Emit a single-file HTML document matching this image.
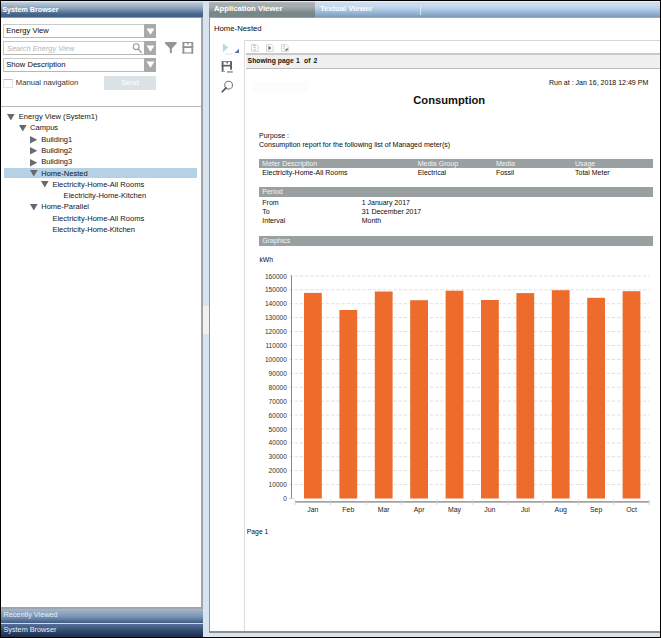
<!DOCTYPE html>
<html><head><meta charset="utf-8"><style>
html,body{margin:0;padding:0;}
body{width:661px;height:638px;position:relative;overflow:hidden;background:#000;font-family:"Liberation Sans", sans-serif;}
.t{position:absolute;line-height:1;white-space:nowrap;}
</style></head><body>
<div style="position:absolute;left:1px;top:1px;width:201.5px;height:17px;background:linear-gradient(#dce8f4 0px,#dce8f4 1px,#b8c8da 1.6px,#a8b8cc 4px,#8ea4bc 7px,#6a84a4 10px,#48668c 13px,#43618a 14.5px,#43618a 15.6px,#7a808c 16.3px,#c8cacc 17px);"></div>
<div class="t" style="left:2.30px;top:5.91px;font-size:7.2px;color:#fff;font-weight:bold;">System Browser</div>
<div style="position:absolute;left:1px;top:17.5px;width:200.3px;height:589.5px;background:#fff;"></div>
<div style="position:absolute;left:201.3px;top:17.5px;width:1.5px;height:591px;background:#9ea4aa;"></div>
<div style="position:absolute;left:1px;top:607px;width:201.8px;height:1.9px;background:#a2a3aa;"></div>
<div style="position:absolute;left:1px;top:608.8px;width:201.5px;height:14px;background:linear-gradient(#a3b8cf,#7893b3 55%,#3f5c84);"></div>
<div style="position:absolute;left:1px;top:622.8px;width:201.5px;height:1px;background:#cfdbe8;"></div>
<div style="position:absolute;left:1px;top:623.8px;width:201.5px;height:13px;background:linear-gradient(#56709a,#2d4568 60%,#1c2f4c);"></div>
<div class="t" style="left:3.40px;top:611.22px;font-size:7.3px;color:#e9eef4;">Recently Viewed</div>
<div class="t" style="left:3.40px;top:626.32px;font-size:7.3px;color:#e9eef4;">System Browser</div>
<div style="position:absolute;left:3.2px;top:24px;width:153.2px;height:13.8px;box-sizing:border-box;border:1px solid #c9c9c9;border-bottom-color:#b8b8b8;background:#fff;"></div>
<div style="position:absolute;left:144.2px;top:24px;width:12.2px;height:13.8px;background:#a9a9a9;"></div>
<svg style="position:absolute;left:146px;top:27.5px" width="9" height="7" viewBox="0 0 9 7"><path d="M0.5 0.5 L8.5 0.5 L4.5 6.8 Z" fill="#fff"/></svg>
<div class="t" style="left:6.30px;top:26.97px;font-size:7.6px;color:#0c0c0c;">Energy View</div>
<div style="position:absolute;left:3.2px;top:41px;width:153.2px;height:13.8px;box-sizing:border-box;border:1px solid #c9c9c9;border-bottom-color:#b8b8b8;background:#fff;"></div>
<div style="position:absolute;left:144.2px;top:41px;width:12.2px;height:13.8px;background:#a9a9a9;"></div>
<svg style="position:absolute;left:146px;top:44.5px" width="9" height="7" viewBox="0 0 9 7"><path d="M0.5 0.5 L8.5 0.5 L4.5 6.8 Z" fill="#fff"/></svg>
<div class="t" style="left:7.00px;top:44.69px;font-size:7.45px;color:#b4b4b4;font-style:italic;">Search Energy View</div>
<svg style="position:absolute;left:132px;top:42.5px" width="11" height="11" viewBox="0 0 11 11"><circle cx="4.2" cy="3.7" r="2.9" fill="none" stroke="#999" stroke-width="1.1"/><path d="M6.1 5.8 L9.6 9.9" stroke="#999" stroke-width="1.3"/></svg>
<div style="position:absolute;left:3.2px;top:57.9px;width:153.2px;height:13.8px;box-sizing:border-box;border:1px solid #c9c9c9;border-bottom-color:#b8b8b8;background:#fff;"></div>
<div style="position:absolute;left:144.2px;top:57.9px;width:12.2px;height:13.8px;background:#a9a9a9;"></div>
<svg style="position:absolute;left:146px;top:61.4px" width="9" height="7" viewBox="0 0 9 7"><path d="M0.5 0.5 L8.5 0.5 L4.5 6.8 Z" fill="#fff"/></svg>
<div class="t" style="left:6.30px;top:60.87px;font-size:7.6px;color:#0c0c0c;">Show Description</div>
<svg style="position:absolute;left:164.5px;top:42px" width="12" height="12" viewBox="0 0 12 12"><path d="M0 0 H11.6 V1.4 L6.9 6.4 V10.6 L6.3 11.3 H5.4 L4.8 10.6 V6.4 L0 1.4 Z" fill="#909596"/></svg>
<svg style="position:absolute;left:181.5px;top:42px" width="12" height="12" viewBox="0 0 12 12"><g fill="#8e9293"><rect x=".5" y="0" width="1.8" height="11.5"/><rect x="9.4" y="0" width="1.8" height="11.5"/><rect x=".5" y="0" width="10.7" height="1.1"/><rect x=".5" y="4.2" width="10.7" height="1.8"/><rect x=".5" y="10.4" width="10.7" height="1.1"/><rect x="5.2" y="1" width="1.4" height="1.6"/></g></svg>
<div style="position:absolute;left:3.3px;top:79px;width:9.5px;height:8.7px;box-sizing:border-box;border:1px solid #dfe5ec;border-top-color:#bcc4cc;background:#fff;"></div>
<div class="t" style="left:15.80px;top:79.18px;font-size:7.7px;color:#333;">Manual navigation</div>
<div style="position:absolute;left:103.9px;top:76.4px;width:52.5px;height:13.6px;background:#dbe3e7;"></div>
<div class="t" style="left:80.00px;width:100px;top:79.45px;font-size:7.5px;color:#fff;text-align:center;">Send</div>
<div style="position:absolute;left:1px;top:105.8px;width:200.3px;height:1.2px;background:#b9b9b9;"></div>
<svg style="position:absolute;left:7.30px;top:113.60px" width="8" height="7" viewBox="0 0 8 7"><path d="M0 0 H7.6 L3.8 6.4 Z" fill="#66696b"/></svg>
<div class="t" style="left:18.80px;top:113.21px;font-size:7.55px;color:#141414;">Energy View (System1)</div>
<svg style="position:absolute;left:18.50px;top:124.87px" width="8" height="7" viewBox="0 0 8 7"><path d="M0 0 H7.6 L3.8 6.4 Z" fill="#66696b"/></svg>
<div class="t" style="left:30.00px;top:124.48px;font-size:7.55px;color:#141414;">Campus</div>
<svg style="position:absolute;left:30.40px;top:136.04px" width="8" height="8" viewBox="0 0 8 8"><path d="M0 0 L7.3 3.8 L0 7.6 Z" fill="#6a6d6f"/></svg>
<div class="t" style="left:41.20px;top:135.75px;font-size:7.55px;color:#141414;">Building1</div>
<svg style="position:absolute;left:30.40px;top:147.31px" width="8" height="8" viewBox="0 0 8 8"><path d="M0 0 L7.3 3.8 L0 7.6 Z" fill="#6a6d6f"/></svg>
<div class="t" style="left:41.20px;top:147.02px;font-size:7.55px;color:#141414;">Building2</div>
<svg style="position:absolute;left:30.40px;top:158.58px" width="8" height="8" viewBox="0 0 8 8"><path d="M0 0 L7.3 3.8 L0 7.6 Z" fill="#6a6d6f"/></svg>
<div class="t" style="left:41.20px;top:158.29px;font-size:7.55px;color:#141414;">Building3</div>
<div style="position:absolute;left:3.8px;top:167.75px;width:193.2px;height:10px;background:#b5d1e6;"></div>
<svg style="position:absolute;left:29.70px;top:169.95px" width="8" height="7" viewBox="0 0 8 7"><path d="M0 0 H7.6 L3.8 6.4 Z" fill="#66696b"/></svg>
<div class="t" style="left:41.20px;top:169.56px;font-size:7.55px;color:#141414;">Home-Nested</div>
<svg style="position:absolute;left:40.90px;top:181.22px" width="8" height="7" viewBox="0 0 8 7"><path d="M0 0 H7.6 L3.8 6.4 Z" fill="#66696b"/></svg>
<div class="t" style="left:52.40px;top:180.83px;font-size:7.55px;color:#141414;">Electricity-Home-All Rooms</div>
<div class="t" style="left:63.60px;top:192.10px;font-size:7.55px;color:#141414;">Electricity-Home-Kitchen</div>
<svg style="position:absolute;left:29.70px;top:203.76px" width="8" height="7" viewBox="0 0 8 7"><path d="M0 0 H7.6 L3.8 6.4 Z" fill="#66696b"/></svg>
<div class="t" style="left:41.20px;top:203.37px;font-size:7.55px;color:#141414;">Home-Parallel</div>
<div class="t" style="left:52.40px;top:214.64px;font-size:7.55px;color:#141414;">Electricity-Home-All Rooms</div>
<div class="t" style="left:52.40px;top:225.91px;font-size:7.55px;color:#141414;">Electricity-Home-Kitchen</div>
<div style="position:absolute;left:202.8px;top:1px;width:6.2px;height:636px;background:#d7e4ee;"></div>
<div style="position:absolute;left:203.2px;top:306.3px;width:5.6px;height:28.2px;background:#f1f1f1;"></div>
<div style="position:absolute;left:208.8px;top:17.5px;width:1.5px;height:615px;background:#8e949a;"></div>
<div style="position:absolute;left:210.3px;top:1px;width:449.3px;height:17px;background:linear-gradient(#e4f0fa 0px,#e4f0fa 1px,#cadcf0 1.6px,#c8daee 5px,#b4cde6 8px,#9cbadc 11px,#88a6c6 14px,#84a0be 15.3px,#7f8ea0 16.2px,#cfd3d8 17px);"></div>
<div style="position:absolute;left:209px;top:1px;width:105.6px;height:17px;background:linear-gradient(#dde8ee 0px,#dde8ee 1px,#a6b0b4 1.6px,#a4aeb0 5px,#a0a4a4 7px,#8c9898 9px,#788888 11.5px,#788888 15px,#7c808c 16.2px,#d0d2d4 17px);"></div>
<div class="t" style="left:214.00px;top:4.80px;font-size:7.68px;color:#fff;font-weight:bold;">Application Viewer</div>
<div class="t" style="left:320.00px;top:4.87px;font-size:7.6px;color:#fafcff;font-weight:bold;">Textual Viewer</div>
<div style="position:absolute;left:420px;top:4.5px;width:1.2px;height:10px;background:#e6eef6;opacity:.8;"></div>
<div style="position:absolute;left:210.3px;top:17.5px;width:449.3px;height:613.5px;background:#fff;"></div>
<div style="position:absolute;left:209px;top:631px;width:450.6px;height:1.6px;background:#8b8e92;"></div>
<div style="position:absolute;left:202.8px;top:632.6px;width:456.8px;height:4.5px;background:#d7e4ee;"></div>
<div class="t" style="left:214.00px;top:24.66px;font-size:7.73px;color:#0c0c0c;">Home-Nested</div>
<div style="position:absolute;left:253px;top:82px;width:55px;height:10px;background:#fcfcfc;"></div>
<svg style="position:absolute;left:222px;top:42px" width="18" height="14" viewBox="0 0 18 14"><path d="M1 1.2 L6.2 5.6 L1 10 Z" fill="#b8dae2"/><path d="M17 6.8 V11 H12.5 Z" fill="#4d72a9"/><circle cx="4.5" cy="12" r=".6" fill="#9fc6d6"/><circle cx="6.8" cy="12" r=".6" fill="#9fc6d6"/><circle cx="9.1" cy="12" r=".6" fill="#9fc6d6"/></svg>
<svg style="position:absolute;left:218px;top:58px" width="18" height="18" viewBox="0 0 18 18"><rect x="3.7" y="3.1" width="1.8" height="10.7" fill="#5e5e5e"/><rect x="12.1" y="3.1" width="1.9" height="8.6" fill="#5e5e5e"/><rect x="3.7" y="3.1" width="10.3" height="1" fill="#7a7a7a"/><rect x="8.5" y="4" width="1.5" height="1.4" fill="#555"/><rect x="3.7" y="6.8" width="10.3" height="1.7" fill="#5e5e5e"/><rect x="3.7" y="13" width="3.3" height="0.9" fill="#9a9a9a"/><rect x="9" y="13.1" width="5.8" height="1.7" fill="#a0a0a0"/></svg>
<svg style="position:absolute;left:218px;top:78px" width="18" height="18" viewBox="0 0 18 18"><circle cx="10.6" cy="7.2" r="3.9" fill="none" stroke="#7c7c7c" stroke-width="1.1"/><path d="M8 9.9 L4.3 13.8" stroke="#555" stroke-width="1.6" stroke-linecap="round"/></svg>
<div style="position:absolute;left:244.3px;top:40px;width:415.3px;height:1.2px;background:#d6d6d6;"></div>
<div style="position:absolute;left:244.3px;top:40px;width:1.2px;height:591px;background:#dcdcdc;"></div>
<div style="position:absolute;left:245.5px;top:53.1px;width:414.1px;height:1.5px;background:#c9c9c9;"></div>
<div style="position:absolute;left:245.5px;top:54.6px;width:414.1px;height:13.4px;background:#f0f0f0;"></div>
<div style="position:absolute;left:245.5px;top:68px;width:414.1px;height:1.4px;background:#bdbdbd;"></div>
<svg style="position:absolute;left:251.2px;top:44.4px" width="8" height="8" viewBox="0 0 8 8"><path d="M.5 .5 H5.5 L7.3 2.3 V7.5 H.5 Z" fill="#fcfcfc" stroke="#d6d6d6" stroke-width=".9"/><path d="M2.3 1.5 H4.5 M2.5 3.4 H4.6 M2.5 5.8 H5" stroke="#9a9a9a" stroke-width=".7"/></svg>
<svg style="position:absolute;left:266px;top:44.4px" width="8" height="8" viewBox="0 0 8 8"><path d="M.5 .5 H5.5 L7.3 2.3 V7.5 H.5 Z" fill="#fcfcfc" stroke="#d6d6d6" stroke-width=".9"/><path d="M2.4 1.8 L5.4 4 L2.4 6.2 Z" fill="#6a6a6a"/></svg>
<svg style="position:absolute;left:280.7px;top:44.4px" width="8" height="8" viewBox="0 0 8 8"><path d="M.5 .5 H5.5 L7.3 2.3 V7.5 H.5 Z" fill="#fcfcfc" stroke="#d6d6d6" stroke-width=".9"/><path d="M2.2 2.2 H4 M2.2 4.2 H3.6" stroke="#9a9a9a" stroke-width=".7"/><path d="M3.6 6.3 L6.2 4.2 L7.6 5.2 L5.5 6.8 Z" fill="#707070"/></svg>
<div class="t" style="left:247.60px;top:58.24px;font-size:6.8px;color:#151515;font-weight:bold;">Showing page</div>
<div class="t" style="left:296.00px;top:58.24px;font-size:6.8px;color:#151515;font-weight:bold;">1</div>
<div class="t" style="left:304.00px;top:58.24px;font-size:6.8px;color:#151515;font-weight:bold;">of</div>
<div class="t" style="left:313.60px;top:58.24px;font-size:6.8px;color:#151515;font-weight:bold;">2</div>
<div class="t" style="left:549.00px;top:78.64px;font-size:7.04px;color:#0c0c0c;">Run at : Jan 16, 2018 12:49 PM</div>
<div class="t" style="left:413.30px;top:95.04px;font-size:11.17px;color:#111;font-weight:bold;">Consumption</div>
<div class="t" style="left:259.00px;top:131.87px;font-size:7.0px;color:#0c0c0c;">Purpose :</div>
<div class="t" style="left:259.00px;top:140.53px;font-size:7.05px;color:#0c0c0c;">Consumption report for the following list of Managed meter(s)</div>
<div style="position:absolute;left:258.7px;top:158.6px;width:394.3px;height:9.1px;background:#9aa0a2;"></div>
<div class="t" style="left:262.30px;top:159.67px;font-size:7.0px;color:#f4f4f4;">Meter Description</div>
<div class="t" style="left:417.70px;top:159.67px;font-size:7.0px;color:#f4f4f4;">Media Group</div>
<div class="t" style="left:495.90px;top:159.67px;font-size:7.0px;color:#f4f4f4;">Media</div>
<div class="t" style="left:575.00px;top:159.67px;font-size:7.0px;color:#f4f4f4;">Usage</div>
<div class="t" style="left:262.30px;top:169.07px;font-size:7.0px;color:#0c0c0c;">Electricity-Home-All Rooms</div>
<div class="t" style="left:417.70px;top:169.07px;font-size:7.0px;color:#0c0c0c;">Electrical</div>
<div class="t" style="left:495.90px;top:169.07px;font-size:7.0px;color:#0c0c0c;">Fossil</div>
<div class="t" style="left:575.00px;top:169.07px;font-size:7.0px;color:#0c0c0c;">Total Meter</div>
<div style="position:absolute;left:258.7px;top:187px;width:394.3px;height:9.6px;background:#9aa0a2;"></div>
<div class="t" style="left:262.30px;top:188.37px;font-size:7.0px;color:#f4f4f4;">Period</div>
<div class="t" style="left:262.30px;top:198.87px;font-size:7.0px;color:#0c0c0c;">From</div>
<div class="t" style="left:361.70px;top:198.87px;font-size:7.0px;color:#0c0c0c;">1 January 2017</div>
<div class="t" style="left:262.30px;top:208.17px;font-size:7.0px;color:#0c0c0c;">To</div>
<div class="t" style="left:361.70px;top:208.17px;font-size:7.0px;color:#0c0c0c;">31 December 2017</div>
<div class="t" style="left:262.30px;top:217.47px;font-size:7.0px;color:#0c0c0c;">Interval</div>
<div class="t" style="left:361.70px;top:217.47px;font-size:7.0px;color:#0c0c0c;">Month</div>
<div style="position:absolute;left:258.7px;top:236px;width:394.3px;height:9.5px;background:#9aa0a2;"></div>
<div class="t" style="left:262.30px;top:237.37px;font-size:7.0px;color:#f4f4f4;">Graphics</div>
<div class="t" style="left:259.40px;top:256.94px;font-size:6.8px;color:#0c0c0c;">kWh</div>
<svg style="position:absolute;left:0;top:0" width="661" height="638" viewBox="0 0 661 638"><path d="M289.5 484.59 H649.5" stroke="#e0e0e0" stroke-width="1" stroke-dasharray="3.4 1.8"/><path d="M289.5 470.68 H649.5" stroke="#e0e0e0" stroke-width="1" stroke-dasharray="3.4 1.8"/><path d="M289.5 456.76 H649.5" stroke="#e0e0e0" stroke-width="1" stroke-dasharray="3.4 1.8"/><path d="M289.5 442.85 H649.5" stroke="#e0e0e0" stroke-width="1" stroke-dasharray="3.4 1.8"/><path d="M289.5 428.94 H649.5" stroke="#e0e0e0" stroke-width="1" stroke-dasharray="3.4 1.8"/><path d="M289.5 415.02 H649.5" stroke="#e0e0e0" stroke-width="1" stroke-dasharray="3.4 1.8"/><path d="M289.5 401.11 H649.5" stroke="#e0e0e0" stroke-width="1" stroke-dasharray="3.4 1.8"/><path d="M289.5 387.20 H649.5" stroke="#e0e0e0" stroke-width="1" stroke-dasharray="3.4 1.8"/><path d="M289.5 373.29 H649.5" stroke="#e0e0e0" stroke-width="1" stroke-dasharray="3.4 1.8"/><path d="M289.5 359.38 H649.5" stroke="#e0e0e0" stroke-width="1" stroke-dasharray="3.4 1.8"/><path d="M289.5 345.46 H649.5" stroke="#e0e0e0" stroke-width="1" stroke-dasharray="3.4 1.8"/><path d="M289.5 331.55 H649.5" stroke="#e0e0e0" stroke-width="1" stroke-dasharray="3.4 1.8"/><path d="M289.5 317.64 H649.5" stroke="#e0e0e0" stroke-width="1" stroke-dasharray="3.4 1.8"/><path d="M289.5 303.72 H649.5" stroke="#e0e0e0" stroke-width="1" stroke-dasharray="3.4 1.8"/><path d="M289.5 289.81 H649.5" stroke="#e0e0e0" stroke-width="1" stroke-dasharray="3.4 1.8"/><path d="M289.5 275.90 H649.5" stroke="#e0e0e0" stroke-width="1" stroke-dasharray="3.4 1.8"/><path d="M291.5 275.40 V498.50" stroke="#8a8a8a" stroke-width="1"/><path d="M289 498.50 H294" stroke="#d0d0d0" stroke-width="1"/><path d="M295 501.9 H649.2" stroke="#a3a3a3" stroke-width="1.9"/><path d="M295.20 499.5 V505" stroke="#cfcfcf" stroke-width="0.9"/><path d="M330.60 499.5 V505" stroke="#cfcfcf" stroke-width="0.9"/><path d="M366.00 499.5 V505" stroke="#cfcfcf" stroke-width="0.9"/><path d="M401.40 499.5 V505" stroke="#cfcfcf" stroke-width="0.9"/><path d="M436.80 499.5 V505" stroke="#cfcfcf" stroke-width="0.9"/><path d="M472.20 499.5 V505" stroke="#cfcfcf" stroke-width="0.9"/><path d="M507.60 499.5 V505" stroke="#cfcfcf" stroke-width="0.9"/><path d="M543.00 499.5 V505" stroke="#cfcfcf" stroke-width="0.9"/><path d="M578.40 499.5 V505" stroke="#cfcfcf" stroke-width="0.9"/><path d="M613.80 499.5 V505" stroke="#cfcfcf" stroke-width="0.9"/><path d="M649.20 499.5 V505" stroke="#cfcfcf" stroke-width="0.9"/><rect x="304.00" y="292.90" width="17.8" height="205.60" fill="#ed6b2b"/><rect x="339.40" y="310.00" width="17.8" height="188.50" fill="#ed6b2b"/><rect x="374.80" y="291.50" width="17.8" height="207.00" fill="#ed6b2b"/><rect x="410.20" y="300.20" width="17.8" height="198.30" fill="#ed6b2b"/><rect x="445.60" y="290.70" width="17.8" height="207.80" fill="#ed6b2b"/><rect x="481.00" y="300.00" width="17.8" height="198.50" fill="#ed6b2b"/><rect x="516.40" y="293.10" width="17.8" height="205.40" fill="#ed6b2b"/><rect x="551.80" y="290.20" width="17.8" height="208.30" fill="#ed6b2b"/><rect x="587.20" y="297.80" width="17.8" height="200.70" fill="#ed6b2b"/><rect x="622.60" y="291.20" width="17.8" height="207.30" fill="#ed6b2b"/></svg>
<div class="t" style="right:374.10px;top:496.11px;font-size:6.6px;color:#333;text-align:right;">0</div>
<div class="t" style="right:374.10px;top:482.20px;font-size:6.6px;color:#333;text-align:right;">10000</div>
<div class="t" style="right:374.10px;top:468.29px;font-size:6.6px;color:#333;text-align:right;">20000</div>
<div class="t" style="right:374.10px;top:454.38px;font-size:6.6px;color:#333;text-align:right;">30000</div>
<div class="t" style="right:374.10px;top:440.46px;font-size:6.6px;color:#333;text-align:right;">40000</div>
<div class="t" style="right:374.10px;top:426.55px;font-size:6.6px;color:#333;text-align:right;">50000</div>
<div class="t" style="right:374.10px;top:412.64px;font-size:6.6px;color:#333;text-align:right;">60000</div>
<div class="t" style="right:374.10px;top:398.73px;font-size:6.6px;color:#333;text-align:right;">70000</div>
<div class="t" style="right:374.10px;top:384.81px;font-size:6.6px;color:#333;text-align:right;">80000</div>
<div class="t" style="right:374.10px;top:370.90px;font-size:6.6px;color:#333;text-align:right;">90000</div>
<div class="t" style="right:374.10px;top:356.99px;font-size:6.6px;color:#333;text-align:right;">100000</div>
<div class="t" style="right:374.10px;top:343.08px;font-size:6.6px;color:#333;text-align:right;">110000</div>
<div class="t" style="right:374.10px;top:329.16px;font-size:6.6px;color:#333;text-align:right;">120000</div>
<div class="t" style="right:374.10px;top:315.25px;font-size:6.6px;color:#333;text-align:right;">130000</div>
<div class="t" style="right:374.10px;top:301.34px;font-size:6.6px;color:#333;text-align:right;">140000</div>
<div class="t" style="right:374.10px;top:287.43px;font-size:6.6px;color:#333;text-align:right;">150000</div>
<div class="t" style="right:374.10px;top:273.51px;font-size:6.6px;color:#333;text-align:right;">160000</div>
<div class="t" style="left:262.90px;width:100px;top:507.16px;font-size:6.9px;color:#222;text-align:center;">Jan</div>
<div class="t" style="left:298.30px;width:100px;top:507.16px;font-size:6.9px;color:#222;text-align:center;">Feb</div>
<div class="t" style="left:333.70px;width:100px;top:507.16px;font-size:6.9px;color:#222;text-align:center;">Mar</div>
<div class="t" style="left:369.10px;width:100px;top:507.16px;font-size:6.9px;color:#222;text-align:center;">Apr</div>
<div class="t" style="left:404.50px;width:100px;top:507.16px;font-size:6.9px;color:#222;text-align:center;">May</div>
<div class="t" style="left:439.90px;width:100px;top:507.16px;font-size:6.9px;color:#222;text-align:center;">Jun</div>
<div class="t" style="left:475.30px;width:100px;top:507.16px;font-size:6.9px;color:#222;text-align:center;">Jul</div>
<div class="t" style="left:510.70px;width:100px;top:507.16px;font-size:6.9px;color:#222;text-align:center;">Aug</div>
<div class="t" style="left:546.10px;width:100px;top:507.16px;font-size:6.9px;color:#222;text-align:center;">Sep</div>
<div class="t" style="left:581.50px;width:100px;top:507.16px;font-size:6.9px;color:#222;text-align:center;">Oct</div>
<div class="t" style="left:246.80px;top:529.24px;font-size:6.8px;color:#111;">Page 1</div>
</body></html>
